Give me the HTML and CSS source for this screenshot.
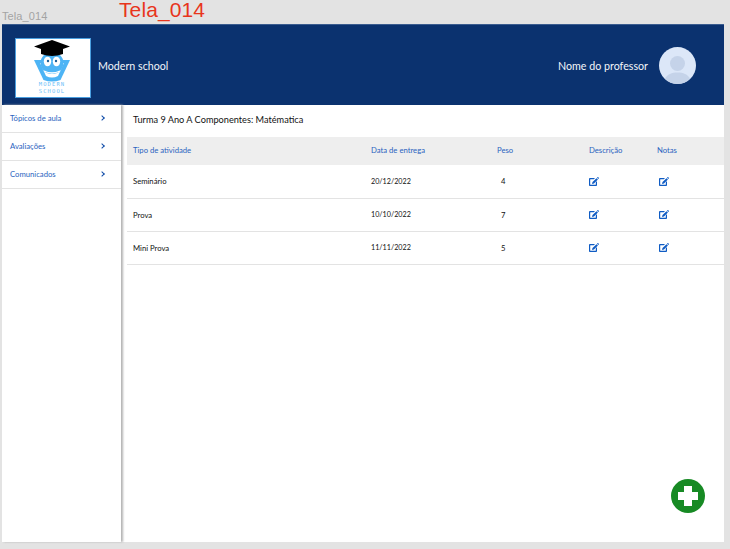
FILE: index.html
```html
<!DOCTYPE html>
<html lang="pt-br">
<head>
    <meta charset="UTF-8">
    <meta name="viewport" content="width=device-width, initial-scale=1.0">
    <title>Tela_014</title>
    <link rel="stylesheet" href="styles.css">
</head>
<body>
    <svg class="defs" width="0" height="0">
        <symbol id="edit" viewBox="0 0 10 9">
            <path d="M1.100 1.100H6L4.800 2.300H1.500a.3.3 0 0 0-.3.3v4.900a.3.3 0 0 0 .3.3h5a.3.3 0 0 0 .3-.3V5.200L8 4v3.900C8 8.500 7.500 9 6.900 9H1.100C.5 9 0 8.500 0 7.900V2.200c0-.6.5-1.100 1.100-1.100z"/>
            <path d="M7.500 1.200l1.400 1.400-3.900 3.900-2 .5.500-2zM8 .7l.5-.5c.2-.2.5-.2.7 0l.6.6c.2.2.2.5 0 .7l-.5.5z"/>
        </symbol>
    </svg>

    <div class="labels">
        <span class="label-gray">Tela_014</span>
        <span class="label-red">Tela_014</span>
    </div>

    <div class="frame">
        <header class="topbar">
            <div class="logo">
                <svg width="74" height="58" viewBox="0 0 74 58">
                    <path d="M18 21H54L44.500 41Q36 44 27.500 41Z" fill="#4db4f5"/>
                    <path d="M24 24Q36 24 48 24L42 37Q36 40 30 37Z" fill="#fff"/>
                    <ellipse cx="36" cy="24" rx="11.500" ry="11" fill="#4db4f5"/>
                    <ellipse cx="31.500" cy="22.500" rx="3.700" ry="4.800" fill="#fff"/>
                    <ellipse cx="40.500" cy="22.500" rx="3.700" ry="4.800" fill="#fff"/>
                    <circle cx="32" cy="22" r="1.200" fill="#1c5f96"/>
                    <circle cx="40" cy="22" r="1.200" fill="#1c5f96"/>
                    <path d="M28 32Q36 36 44 32" fill="none" stroke="#fff" stroke-width="1.300"/>
                    <path d="M36 1L54 7.500 47 10V15Q36 19 25 15V10L18 7.500Z" fill="#000"/>
                    <text class="logo-text" x="36" y="47">MODERN</text>
                    <text class="logo-text" x="36" y="54">SCHOOL</text>
                </svg>
            </div>
            <span class="school">Modern school</span>
            <span class="teacher">Nome do professor</span>
            <svg class="avatar" width="37" height="37" viewBox="0 0 37 37">
                <circle cx="18.500" cy="18.500" r="18.500" fill="#dce7f8"/>
                <circle cx="18.500" cy="16.500" r="7.500" fill="#c5d3e9"/>
                <path d="M6 32c2-5 7-6.500 12.500-6.500S29 27 31 32c-3 3-7.500 5-12.500 5S9 35 6 32z" fill="#c5d3e9"/>
            </svg>
        </header>

        <div class="content">
            <nav class="sidebar">
                <a class="menu-item" href="#">Tópicos de aula <span class="chevron"></span></a>
                <a class="menu-item" href="#">Avaliações <span class="chevron"></span></a>
                <a class="menu-item" href="#">Comunicados <span class="chevron"></span></a>
            </nav>

            <main class="main">
                <h1 class="class-title">Turma 9 Ano A Componentes: Matématica</h1>
                <table class="activities">
                    <thead>
                        <tr>
                            <th>Tipo de atividade</th>
                            <th>Data de entrega</th>
                            <th>Peso</th>
                            <th>Descrição</th>
                            <th>Notas</th>
                        </tr>
                    </thead>
                    <tbody>
                        <tr>
                            <td>Seminário</td>
                            <td class="date">20/12/2022</td>
                            <td class="weight">4</td>
                            <td><svg class="edit-icon"><use href="#edit"/></svg></td>
                            <td><svg class="edit-icon notes"><use href="#edit"/></svg></td>
                        </tr>
                        <tr>
                            <td>Prova</td>
                            <td class="date">10/10/2022</td>
                            <td class="weight">7</td>
                            <td><svg class="edit-icon"><use href="#edit"/></svg></td>
                            <td><svg class="edit-icon notes"><use href="#edit"/></svg></td>
                        </tr>
                        <tr>
                            <td>Mini Prova</td>
                            <td class="date">11/11/2022</td>
                            <td class="weight">5</td>
                            <td><svg class="edit-icon"><use href="#edit"/></svg></td>
                            <td><svg class="edit-icon notes"><use href="#edit"/></svg></td>
                        </tr>
                    </tbody>
                </table>

                <svg class="add-btn" width="34" height="34" viewBox="0 0 34 34">
                    <circle cx="17" cy="17" r="17" fill="#178a24"/>
                    <path d="M13 7h8v6h6v8h-6v6h-8v-6H7v-8h6z" fill="#fff"/>
                </svg>
            </main>
        </div>
    </div>
</body>
</html>
```

FILE: styles.css
```css
html, body {
    height: 100%;
}
body {
    margin: 0;
    padding: 0;
    background-color: #e3e3e3;
    font-family: Lato, "Noto Sans", sans-serif;
    overflow: hidden;
}
.defs {
    position: absolute;
}
.labels {
    height: 24px;
    display: flex;
    align-items: flex-start;
    padding-left: 2px;
    font-family: "Liberation Sans", Arial, sans-serif;
}
.label-gray {
    width: 117px;
    margin-top: 10px;
    font-size: 11px;
    line-height: 13px;
    letter-spacing: 0.100px;
    color: #a3a3a3;
}
.label-red {
    font-size: 21px;
    line-height: 20px;
    letter-spacing: 0.100px;
    color: #e8351c;
}
.frame {
    width: 722px;
    height: 518px;
    margin-left: 2px;
    background-color: #fff;
    display: flex;
    flex-direction: column;
}
.topbar {
    height: 81px;
    flex-shrink: 0;
    box-sizing: border-box;
    border-top: 1px solid #3a5c8f;
    background-color: #0b326f;
    display: flex;
    align-items: center;
    padding: 0 28px 0 13px;
    color: #f2f5fa;
    font-size: 10.700px;
}
.logo {
    width: 74px;
    height: 58px;
    border: 1px solid #4a9fe0;
    background-color: #fff;
    margin-top: 5px;
}
.logo svg {
    display: block;
}
.logo-text {
    font-family: "DejaVu Sans Mono", monospace;
    font-size: 5.500px;
    letter-spacing: 1.100px;
    fill: #6cc0f7;
    text-anchor: middle;
}
.school {
    margin-left: 7px;
    flex: 1;
}
.teacher {
    margin-right: 11px;
}
.content {
    flex: 1;
    display: flex;
}
.sidebar {
    width: 119px;
    flex-shrink: 0;
    box-shadow: 2px 0 2px #b4b4b4;
}
.menu-item {
    height: 25px;
    border-bottom: 1px solid #e3e3e3;
    display: flex;
    align-items: center;
    justify-content: space-between;
    padding: 0 17px 2px 8px;
    color: #2a63c0;
    font-size: 7.700px;
    text-decoration: none;
}
.chevron {
    width: 3px;
    height: 3px;
    border-top: 1.500px solid #0f4ba8;
    border-right: 1.500px solid #0f4ba8;
    transform: rotate(45deg);
}
.main {
    flex: 1;
    position: relative;
    padding-left: 6px;
}
.class-title {
    margin: 0;
    height: 32px;
    padding-left: 6px;
    font-size: 9.200px;
    font-weight: normal;
    line-height: 29px;
    color: #111;
}
.activities {
    width: 597px;
    border-collapse: collapse;
    table-layout: fixed;
    font-size: 7.700px;
}
.activities th:nth-child(1) { width: 238px; }
.activities th:nth-child(2) { width: 126px; }
.activities th:nth-child(3) { width: 92px; }
.activities th:nth-child(4) { width: 68px; }
th {
    height: 28px;
    box-sizing: border-box;
    padding: 0 0 3px 6px;
    background-color: #eeeeee;
    color: #2a63c0;
    font-weight: normal;
    text-align: left;
}
td {
    height: 33px;
    box-sizing: border-box;
    padding: 0 0 0 6px;
    border-bottom: 1px solid #e3e3e3;
    color: #111;
}
.date {
    font-size: 7.200px;
}
.weight {
    padding-left: 10px;
}
.edit-icon {
    display: block;
    width: 10px;
    height: 9px;
    fill: #0f5cc4;
}
.edit-icon.notes {
    margin-left: 2px;
}
.add-btn {
    position: absolute;
    right: 19px;
    bottom: 29px;
}
```
